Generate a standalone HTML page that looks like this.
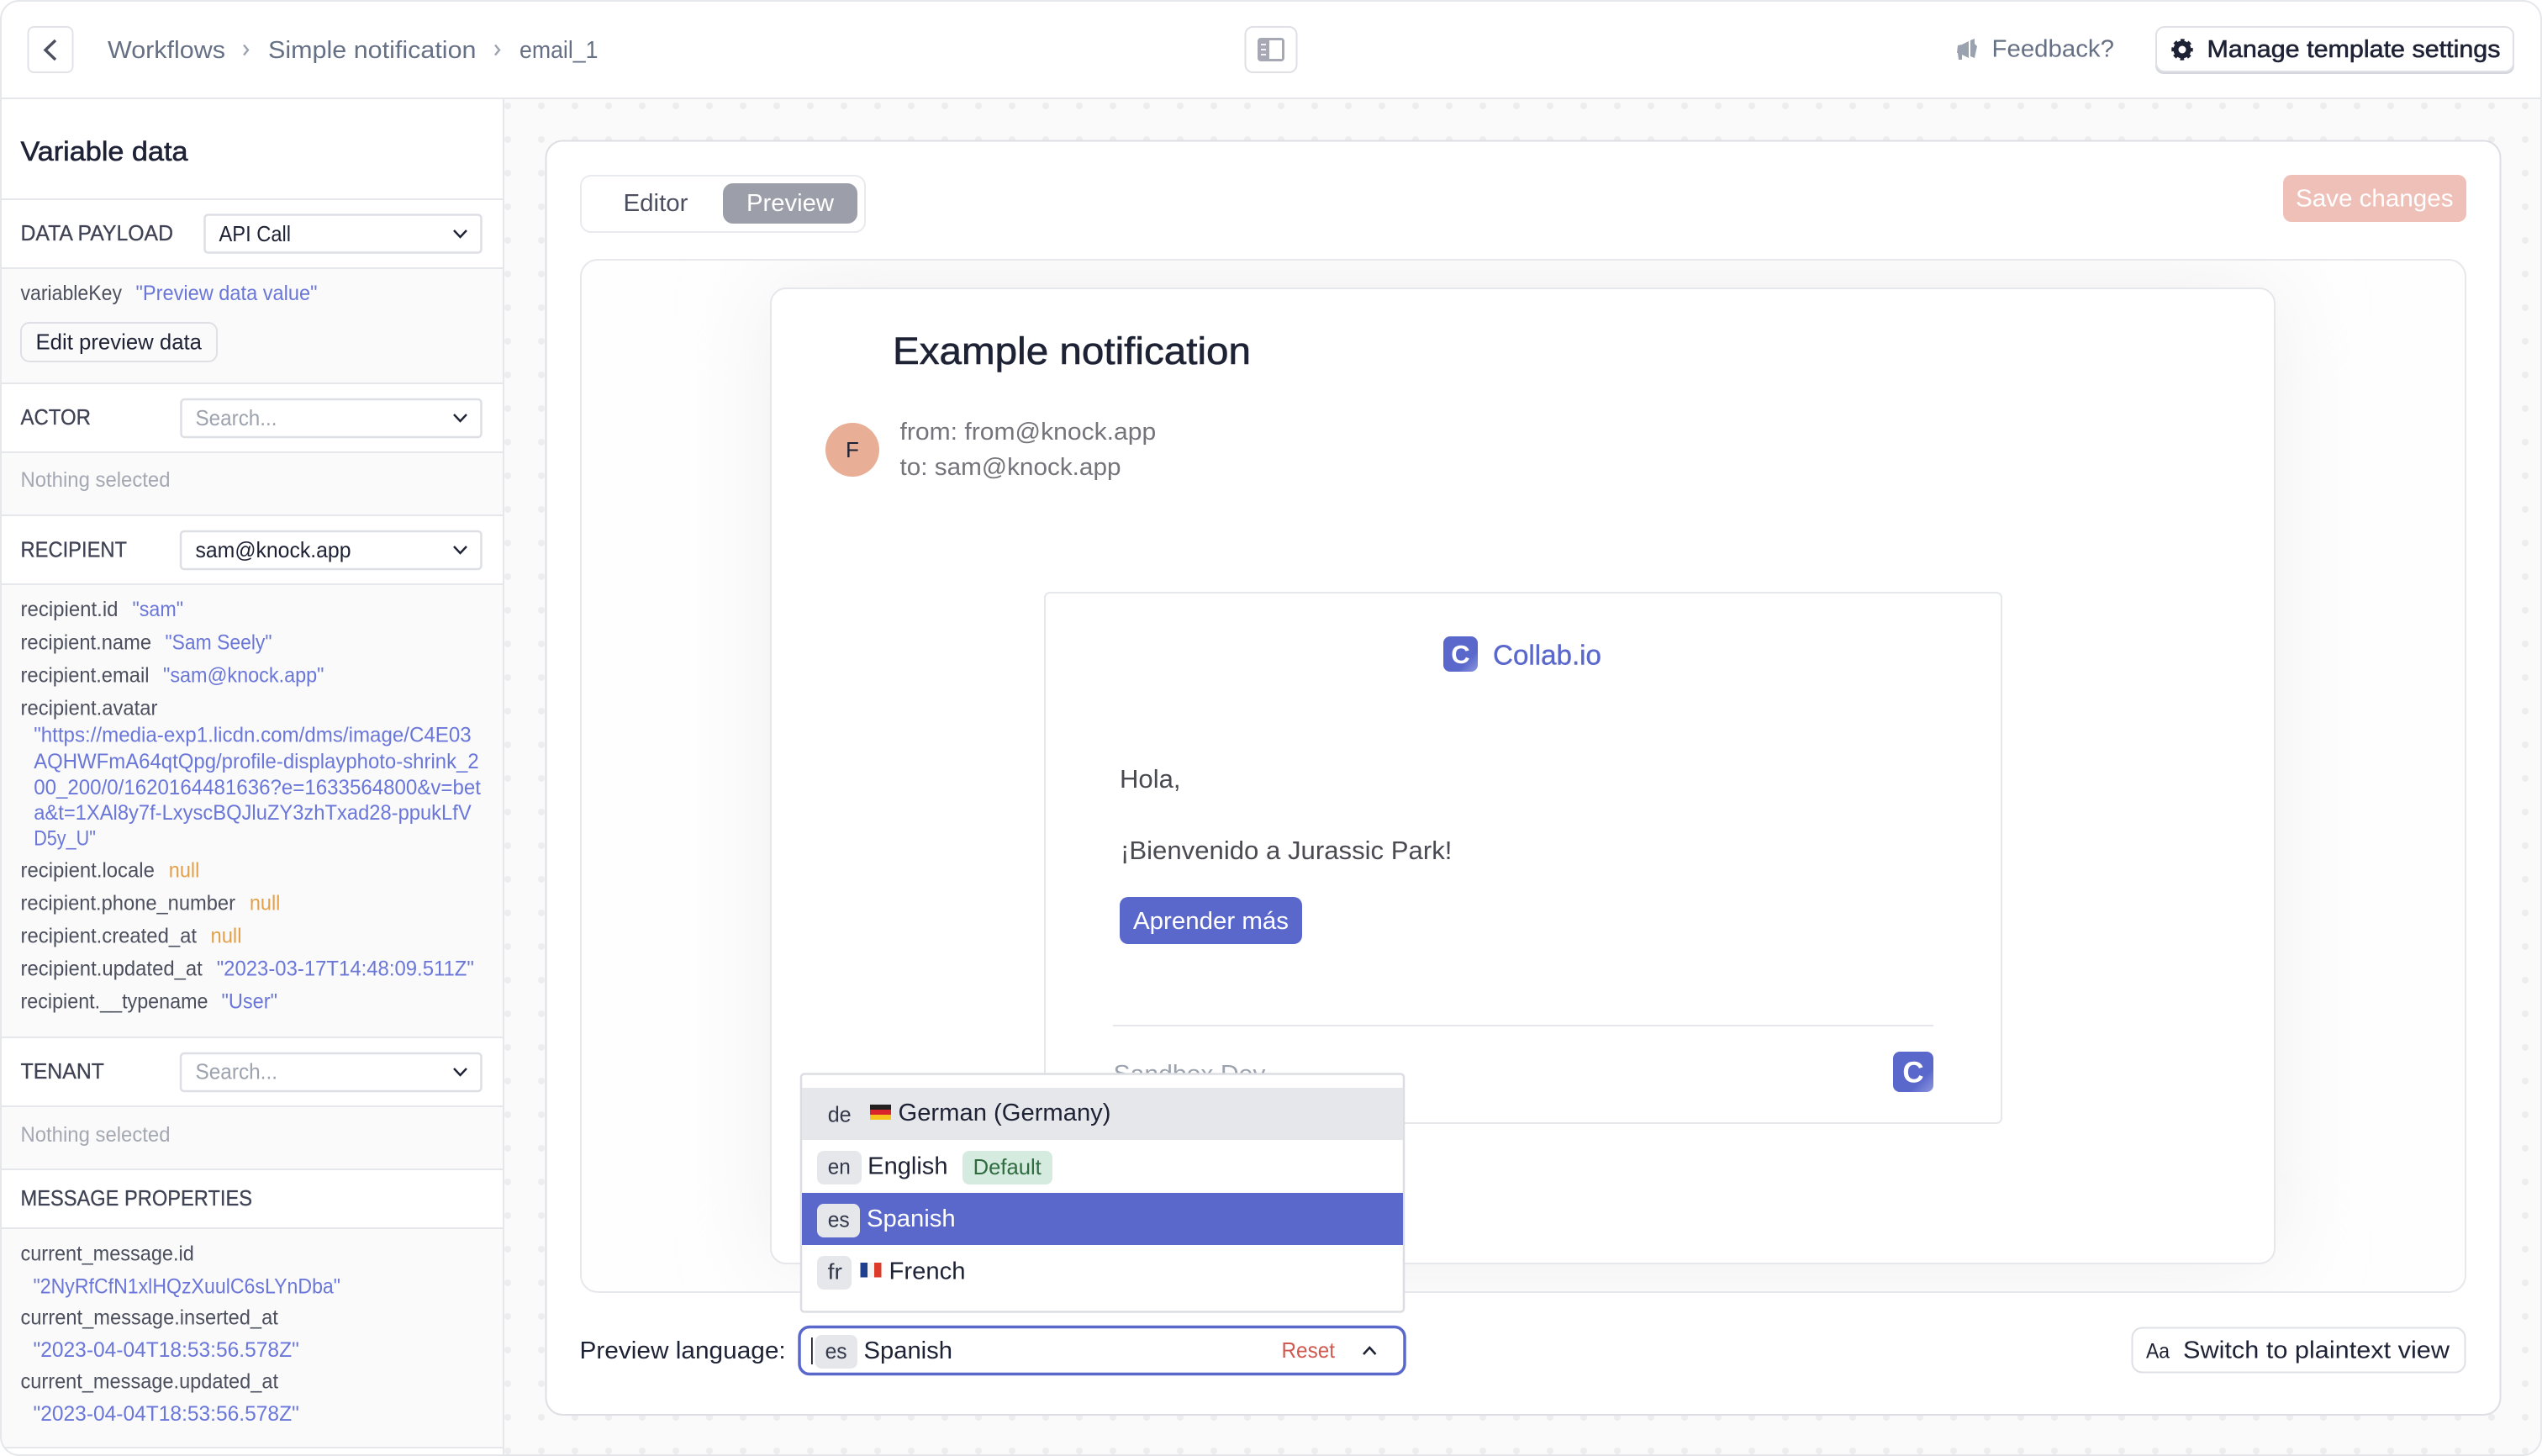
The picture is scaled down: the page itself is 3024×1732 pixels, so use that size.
<!DOCTYPE html>
<html lang="en"><head><meta charset="utf-8"><title>Preview</title>
<style>
html,body{margin:0;padding:0;background:#fff}
svg{display:block}
text{font-family:"Liberation Sans",Arial,sans-serif;font-size:29px;fill:#1e2235;white-space:pre}
.g{fill:#667085}
.l{font-size:26px;fill:#3f4354;stroke:#3f4354;stroke-width:.3px}
.k{font-size:24.6px;fill:#4c505e}
.v{font-size:24.6px;fill:#6a77d9}
.n{font-size:24.6px;fill:#e3a04a}
.p{font-size:25.6px;fill:#9ca3af}
.s{font-size:25.6px;fill:#1e2235}
.m{stroke:#1e2235;stroke-width:.6px}
.t{fill:#4b4f60}
.w{fill:#fff}
.b{fill:#4a4a52}
.f{fill:#74747b}
.c{fill:#5a68cc}
.bd{font-size:25.6px;fill:#33384a}
</style></head><body>
<svg xmlns="http://www.w3.org/2000/svg" width="3024" height="1732" viewBox="0 0 3024 1732">
<defs>
<pattern id="d" patternUnits="userSpaceOnUse" x="600" y="122" width="40" height="40"><circle cx="4" cy="4" r="4" fill="#ededef"/></pattern>
<clipPath id="fr"><rect x="1" y="1" width="3022" height="1730" rx="22"/></clipPath>
<clipPath id="pn"><rect x="691" y="309" width="2242" height="1228" rx="20"/></clipPath>
<filter id="bl" x="-20%" y="-20%" width="140%" height="140%"><feGaussianBlur stdDeviation="55"/></filter>
<linearGradient id="cg" x1="0" y1="0" x2="1" y2="1"><stop offset=".7" stop-color="#5a68cc"/><stop offset="1" stop-color="#8f98de"/></linearGradient>
</defs>
<g clip-path="url(#fr)">
<rect width="3024" height="1732" fill="#fafafa"/>
<rect x="600" y="118" width="2424" height="1614" fill="url(#d)"/>
<rect width="3024" height="116" fill="#fff"/>
<rect y="116" width="3024" height="2" fill="#e5e7eb"/>
<!-- sidebar -->
<rect y="118" width="598" height="1614" fill="#fff"/>
<rect x="598" y="118" width="2" height="1614" fill="#e5e7eb"/>
<rect y="320" width="598" height="135" fill="#fafafa"/>
<rect y="539" width="598" height="73" fill="#fafafa"/>
<rect y="696" width="598" height="537" fill="#fafafa"/>
<rect y="1317" width="598" height="73" fill="#fafafa"/>
<rect y="1462" width="598" height="259" fill="#fafafa"/>
<g fill="#e5e7eb">
<rect y="236" width="598" height="2"/><rect y="318" width="598" height="2"/><rect y="455" width="598" height="2"/><rect y="537" width="598" height="2"/><rect y="612" width="598" height="2"/><rect y="694" width="598" height="2"/><rect y="1233" width="598" height="2"/><rect y="1315" width="598" height="2"/><rect y="1390" width="598" height="2"/><rect y="1460" width="598" height="2"/><rect y="1721" width="598" height="2"/>
</g>
</g>
<!-- header -->
<rect x="33.500" y="32" width="53" height="54" rx="7" fill="#fff" stroke="#e2e3e8" stroke-width="2"/>
<path d="M66 48 54 59.500 66 71" fill="none" stroke="#4b4f60" stroke-width="3.400"/>
<text class="g" x="128" y="69" textLength="140" lengthAdjust="spacingAndGlyphs">Workflows</text>
<path d="M290 53.500 295 59.500 290 65.500" fill="none" stroke="#9ca3af" stroke-width="2.400"/>
<text class="g" x="319" y="69" textLength="247.500" lengthAdjust="spacingAndGlyphs">Simple notification</text>
<path d="M589 53.500 594 59.500 589 65.500" fill="none" stroke="#9ca3af" stroke-width="2.400"/>
<text class="g" x="618" y="69" textLength="93.500" lengthAdjust="spacingAndGlyphs">email_1</text>
<rect x="1481.500" y="32" width="61" height="54" rx="9" fill="#fff" stroke="#dfe0e5" stroke-width="2"/>
<rect x="1496" y="45" width="32" height="28" rx="4" fill="#a6a9b4"/>
<rect x="1510" y="48" width="15" height="22" fill="#fff"/>
<path d="M1500 53h6M1500 59h6M1500 65h6" stroke="#fff" stroke-width="1.800"/>
<g fill="#9aa1af"><path d="M2342 49v20l-8-4v6h-4l-1-8h-1l1-9 5-1z"/><path d="M2344 48l5-2v6l3 3-2 9-1 5-5-2z"/></g>
<text class="g" x="2369.500" y="67.500" textLength="145.500" lengthAdjust="spacingAndGlyphs">Feedback?</text>
<rect x="2564" y="33" width="427" height="55" rx="10" fill="#d6d7de"/>
<rect x="2565" y="32" width="425" height="53" rx="10" fill="#fff" stroke="#e0e1e6" stroke-width="2"/>
<circle cx="2596" cy="59" r="7.500" fill="none" stroke="#1e2235" stroke-width="6"/>
<circle cx="2596" cy="59" r="11" fill="none" stroke="#1e2235" stroke-width="3.500" stroke-dasharray="4.600 4.040" stroke-dashoffset="2.300"/>
<text class="m" x="2625.500" y="68" textLength="349" lengthAdjust="spacingAndGlyphs">Manage template settings</text>
<!-- left content -->
<g transform="translate(-.5 0)">
<text class="m" x="25" y="191" style="font-size:32.500px" textLength="199" lengthAdjust="spacingAndGlyphs">Variable data</text>
<text class="l" x="25" y="286" textLength="181.500" lengthAdjust="spacingAndGlyphs">DATA PAYLOAD</text>
<text class="s" x="261" y="287" textLength="85.500" lengthAdjust="spacingAndGlyphs">API Call</text>
<text class="k" x="25" y="357" textLength="120.500" lengthAdjust="spacingAndGlyphs">variableKey</text>
<text class="v" x="162" y="357" textLength="216" lengthAdjust="spacingAndGlyphs">"Preview data value"</text>
<text class="s" x="43" y="415.500" textLength="197.500" lengthAdjust="spacingAndGlyphs">Edit preview data</text>
<text class="l" x="25" y="505" textLength="83.500" lengthAdjust="spacingAndGlyphs">ACTOR</text>
<text class="p" x="233" y="506" textLength="97" lengthAdjust="spacingAndGlyphs">Search...</text>
<text class="k" style="fill:#a4a8b2" x="25" y="579" textLength="178" lengthAdjust="spacingAndGlyphs">Nothing selected</text>
<text class="l" x="25" y="662.500" textLength="126.500" lengthAdjust="spacingAndGlyphs">RECIPIENT</text>
<text class="s" x="233" y="663" textLength="185" lengthAdjust="spacingAndGlyphs">sam@knock.app</text>
<text class="k" x="25" y="733" textLength="116" lengthAdjust="spacingAndGlyphs">recipient.id</text>
<text class="v" x="158" y="733" textLength="60.500" lengthAdjust="spacingAndGlyphs">"sam"</text>
<text class="k" x="25" y="772.500" textLength="155.500" lengthAdjust="spacingAndGlyphs">recipient.name</text>
<text class="v" x="197" y="772.500" textLength="127" lengthAdjust="spacingAndGlyphs">"Sam Seely"</text>
<text class="k" x="25" y="811.500" textLength="153" lengthAdjust="spacingAndGlyphs">recipient.email</text>
<text class="v" x="194.500" y="811.500" textLength="191.500" lengthAdjust="spacingAndGlyphs">"sam@knock.app"</text>
<text class="k" x="25" y="850.500" textLength="163" lengthAdjust="spacingAndGlyphs">recipient.avatar</text>
<text class="v" x="40.700" y="882.700" textLength="520.500" lengthAdjust="spacingAndGlyphs">"https://media-exp1.licdn.com/dms/image/C4E03</text>
<text class="v" x="40.700" y="914" textLength="529.500" lengthAdjust="spacingAndGlyphs">AQHWFmA64qtQpg/profile-displayphoto-shrink_2</text>
<text class="v" x="40.700" y="944.800" textLength="531.800" lengthAdjust="spacingAndGlyphs">00_200/0/1620164481636?e=1633564800&amp;v=bet</text>
<text class="v" x="40.700" y="975" textLength="520.500" lengthAdjust="spacingAndGlyphs">a&amp;t=1XAl8y7f-LxyscBQJluZY3zhTxad28-ppukLfV</text>
<text class="v" x="40.700" y="1005.700" textLength="73.700" lengthAdjust="spacingAndGlyphs">D5y_U"</text>
<text class="k" x="25" y="1043.600" textLength="159.400" lengthAdjust="spacingAndGlyphs">recipient.locale</text>
<text class="n" x="201.300" y="1043.600" textLength="36.500" lengthAdjust="spacingAndGlyphs">null</text>
<text class="k" x="25" y="1082.400" textLength="255.500" lengthAdjust="spacingAndGlyphs">recipient.phone_number</text>
<text class="n" x="297.400" y="1082.400" textLength="36.500" lengthAdjust="spacingAndGlyphs">null</text>
<text class="k" x="25" y="1121.600" textLength="209.500" lengthAdjust="spacingAndGlyphs">recipient.created_at</text>
<text class="n" x="251" y="1121.600" textLength="37" lengthAdjust="spacingAndGlyphs">null</text>
<text class="k" x="25" y="1160.300" textLength="216.300" lengthAdjust="spacingAndGlyphs">recipient.updated_at</text>
<text class="v" x="258.200" y="1160.300" textLength="306.200" lengthAdjust="spacingAndGlyphs">"2023-03-17T14:48:09.511Z"</text>
<text class="k" x="25" y="1199.400" textLength="223" lengthAdjust="spacingAndGlyphs">recipient.__typename</text>
<text class="v" x="264" y="1199.400" textLength="66.500" lengthAdjust="spacingAndGlyphs">"User"</text>
<text class="l" x="25" y="1283" textLength="99.500" lengthAdjust="spacingAndGlyphs">TENANT</text>
<text class="p" x="233" y="1283.500" textLength="97.500" lengthAdjust="spacingAndGlyphs">Search...</text>
<text class="k" style="fill:#a4a8b2" x="25" y="1357.800" textLength="178" lengthAdjust="spacingAndGlyphs">Nothing selected</text>
<text class="l" x="25" y="1433.800" textLength="275.500" lengthAdjust="spacingAndGlyphs">MESSAGE PROPERTIES</text>
<text class="k" x="25" y="1499.300" textLength="206.300" lengthAdjust="spacingAndGlyphs">current_message.id</text>
<text class="v" x="40" y="1538.300" textLength="365.500" lengthAdjust="spacingAndGlyphs">"2NyRfCfN1xlHQzXuulC6sLYnDba"</text>
<text class="k" x="25" y="1575.300" textLength="306.300" lengthAdjust="spacingAndGlyphs">current_message.inserted_at</text>
<text class="v" x="40" y="1614" textLength="316.300" lengthAdjust="spacingAndGlyphs">"2023-04-04T18:53:56.578Z"</text>
<text class="k" x="25" y="1651.300" textLength="306.500" lengthAdjust="spacingAndGlyphs">current_message.updated_at</text>
<text class="v" x="40" y="1690" textLength="316.300" lengthAdjust="spacingAndGlyphs">"2023-04-04T18:53:56.578Z"</text>
</g>
<rect x="243.500" y="255.500" width="329" height="45" rx="4" fill="none" stroke="#dedfe5" stroke-width="2.500"/>
<path d="M540 274 547.500 282 555 274" fill="none" stroke="#1e2235" stroke-width="2.400"/>
<rect x="25" y="384" width="233" height="46" rx="10" fill="none" stroke="#dfe0e5" stroke-width="2"/>
<rect x="215.500" y="475" width="357" height="45" rx="4" fill="none" stroke="#dedfe5" stroke-width="2.500"/>
<path d="M540 493 547.500 501 555 493" fill="none" stroke="#1e2235" stroke-width="2.400"/>
<rect x="215" y="632" width="357.500" height="45" rx="4" fill="none" stroke="#dedfe5" stroke-width="2.500"/>
<path d="M540 650 547.500 658 555 650" fill="none" stroke="#1e2235" stroke-width="2.400"/>
<rect x="215" y="1253" width="357.500" height="45" rx="4" fill="none" stroke="#dedfe5" stroke-width="2.500"/>
<path d="M540 1271 547.500 1279 555 1271" fill="none" stroke="#1e2235" stroke-width="2.400"/>
<!-- main card -->
<rect x="649.500" y="167.500" width="2325" height="1515.500" rx="20" fill="#fff" stroke="#dedfe4" stroke-width="2"/>
<rect x="691" y="209" width="338" height="67" rx="12" fill="#fff" stroke="#e8eaee" stroke-width="2"/>
<rect x="860" y="218" width="160" height="48" rx="12" fill="#9c9fa9"/>
<text class="t" x="741.500" y="251" textLength="77" lengthAdjust="spacingAndGlyphs">Editor</text>
<text class="w" x="888" y="251" textLength="104" lengthAdjust="spacingAndGlyphs">Preview</text>
<rect x="2716" y="208" width="218" height="56" rx="10" fill="#efc0b8"/>
<text class="w" x="2731" y="245.500" textLength="187.500" lengthAdjust="spacingAndGlyphs">Save changes</text>
<!-- preview panel -->
<rect x="691" y="309" width="2242" height="1228" rx="20" fill="#fefefe"/>
<g clip-path="url(#pn)"><rect x="917" y="343" width="1789" height="1160" fill="#eeeeef" filter="url(#bl)"/></g>
<rect x="691" y="309" width="2242" height="1228" rx="20" fill="none" stroke="#e7e8ec" stroke-width="2"/>
<rect x="917" y="343" width="1789" height="1160" rx="18" fill="#fff" stroke="#e5e7eb" stroke-width="2"/>
<text class="m" x="1062" y="433" style="font-size:45px" textLength="426" lengthAdjust="spacingAndGlyphs">Example notification</text>
<circle cx="1014" cy="535" r="32" fill="#e8ae96"/>
<text x="1014" y="544" text-anchor="middle" style="font-size:26px">F</text>
<text class="f" x="1070.500" y="523" textLength="304.700" lengthAdjust="spacingAndGlyphs">from: from@knock.app</text>
<text class="f" x="1070.500" y="565" textLength="263" lengthAdjust="spacingAndGlyphs">to: sam@knock.app</text>
<!-- email -->
<rect x="1243" y="705" width="1138" height="631" rx="6" fill="#fff" stroke="#e5e7eb" stroke-width="2"/>
<rect x="1717" y="757" width="41" height="42" rx="8" fill="url(#cg)"/>
<text class="w" x="1737.500" y="789" text-anchor="middle" style="font-size:31px;font-weight:bold">C</text>
<text class="c" x="1776" y="790.500" style="font-size:33px;stroke:#5a68cc;stroke-width:.4px" textLength="129" lengthAdjust="spacingAndGlyphs">Collab.io</text>
<text class="b" x="1332" y="937" style="font-size:31px" textLength="72.500" lengthAdjust="spacingAndGlyphs">Hola,</text>
<text class="b" x="1333" y="1022" style="font-size:31px" textLength="394.400" lengthAdjust="spacingAndGlyphs">¡Bienvenido a Jurassic Park!</text>
<rect x="1332" y="1067" width="217" height="56" rx="10" fill="#5a68cc"/>
<text class="w" x="1348" y="1105" textLength="185" lengthAdjust="spacingAndGlyphs">Aprender más</text>
<rect x="1324" y="1219" width="976" height="2" fill="#e5e7eb"/>
<text x="1324.500" y="1287" style="font-size:29px;fill:#9ca3af" textLength="181" lengthAdjust="spacingAndGlyphs">Sandbox Dev</text>
<rect x="2252" y="1251" width="48" height="48" rx="8" fill="url(#cg)"/>
<text class="w" x="2276" y="1287.500" text-anchor="middle" style="font-size:35px;font-weight:bold">C</text>
<!-- dropdown -->
<rect x="953" y="1277.500" width="717" height="283" rx="4" fill="#fff" stroke="#dcdde2" stroke-width="2.500"/>
<rect x="954" y="1294" width="715" height="62" fill="#e5e7eb"/>
<text class="bd" x="984.700" y="1334.700" textLength="28" lengthAdjust="spacingAndGlyphs">de</text>
<rect x="1035" y="1314" width="25" height="6" fill="#23211f"/><rect x="1035" y="1320" width="25" height="6" fill="#d8242a"/><rect x="1035" y="1326" width="25" height="6" fill="#f6c21c"/>
<text x="1068.500" y="1333" textLength="253" lengthAdjust="spacingAndGlyphs">German (Germany)</text>
<rect x="972" y="1369" width="53" height="40" rx="8" fill="#e5e7eb"/>
<text class="bd" x="984.700" y="1396.700" textLength="27" lengthAdjust="spacingAndGlyphs">en</text>
<text x="1032.200" y="1396.700" textLength="95.300" lengthAdjust="spacingAndGlyphs">English</text>
<rect x="1145" y="1369" width="107" height="40" rx="8" fill="#d6ebdf"/>
<text x="1157.600" y="1397" style="font-size:25.600px;fill:#2f6b3f" textLength="81.200" lengthAdjust="spacingAndGlyphs">Default</text>
<rect x="954" y="1419" width="715" height="62" fill="#5a68cc"/>
<rect x="972" y="1432" width="51" height="40" rx="8" fill="#e5e7eb"/>
<text class="bd" x="984.700" y="1459.700" textLength="26" lengthAdjust="spacingAndGlyphs">es</text>
<text class="w" x="1031" y="1459" textLength="105.700" lengthAdjust="spacingAndGlyphs">Spanish</text>
<rect x="972" y="1494" width="41" height="40" rx="8" fill="#e5e7eb"/>
<text class="bd" x="984.700" y="1521.700" textLength="17.300" lengthAdjust="spacingAndGlyphs">fr</text>
<rect x="1023.500" y="1502" width="8.500" height="17.500" fill="#1f3f8f"/><rect x="1032" y="1502" width="8" height="17.500" fill="#f5f5f5"/><rect x="1040" y="1502" width="8.500" height="17.500" fill="#dd3b2a"/>
<text x="1057.500" y="1521.700" textLength="91" lengthAdjust="spacingAndGlyphs">French</text>
<!-- bottom row -->
<text x="689.500" y="1616" textLength="245.200" lengthAdjust="spacingAndGlyphs">Preview language:</text>
<rect x="951" y="1578.500" width="720" height="56" rx="12" fill="#fff" stroke="#5a68cc" stroke-width="3.500"/>
<rect x="965" y="1591" width="1.800" height="32" fill="#1e2235"/>
<rect x="969.500" y="1588" width="50.500" height="40" rx="8" fill="#e5e7eb"/>
<text class="bd" x="981.600" y="1616" textLength="26" lengthAdjust="spacingAndGlyphs">es</text>
<text x="1027.500" y="1616" textLength="105.500" lengthAdjust="spacingAndGlyphs">Spanish</text>
<text x="1524.500" y="1615" style="font-size:25.600px;fill:#cf5a50" textLength="63.500" lengthAdjust="spacingAndGlyphs">Reset</text>
<path d="M1622 1611 1629.300 1603 1636.500 1611" fill="none" stroke="#1e2235" stroke-width="2.600"/>
<rect x="2536.500" y="1579.500" width="396" height="53" rx="12" fill="#fff" stroke="#dfe0e5" stroke-width="2"/>
<text x="2553" y="1615.500" style="font-size:25px" textLength="28" lengthAdjust="spacingAndGlyphs">Aa</text>
<text x="2597" y="1615.700" textLength="317" lengthAdjust="spacingAndGlyphs">Switch to plaintext view</text>
<!-- outer frame -->
<rect x="1" y="1" width="3022" height="1730" rx="22" fill="none" stroke="#e5e7eb" stroke-width="2"/>
</svg>
</body></html>
